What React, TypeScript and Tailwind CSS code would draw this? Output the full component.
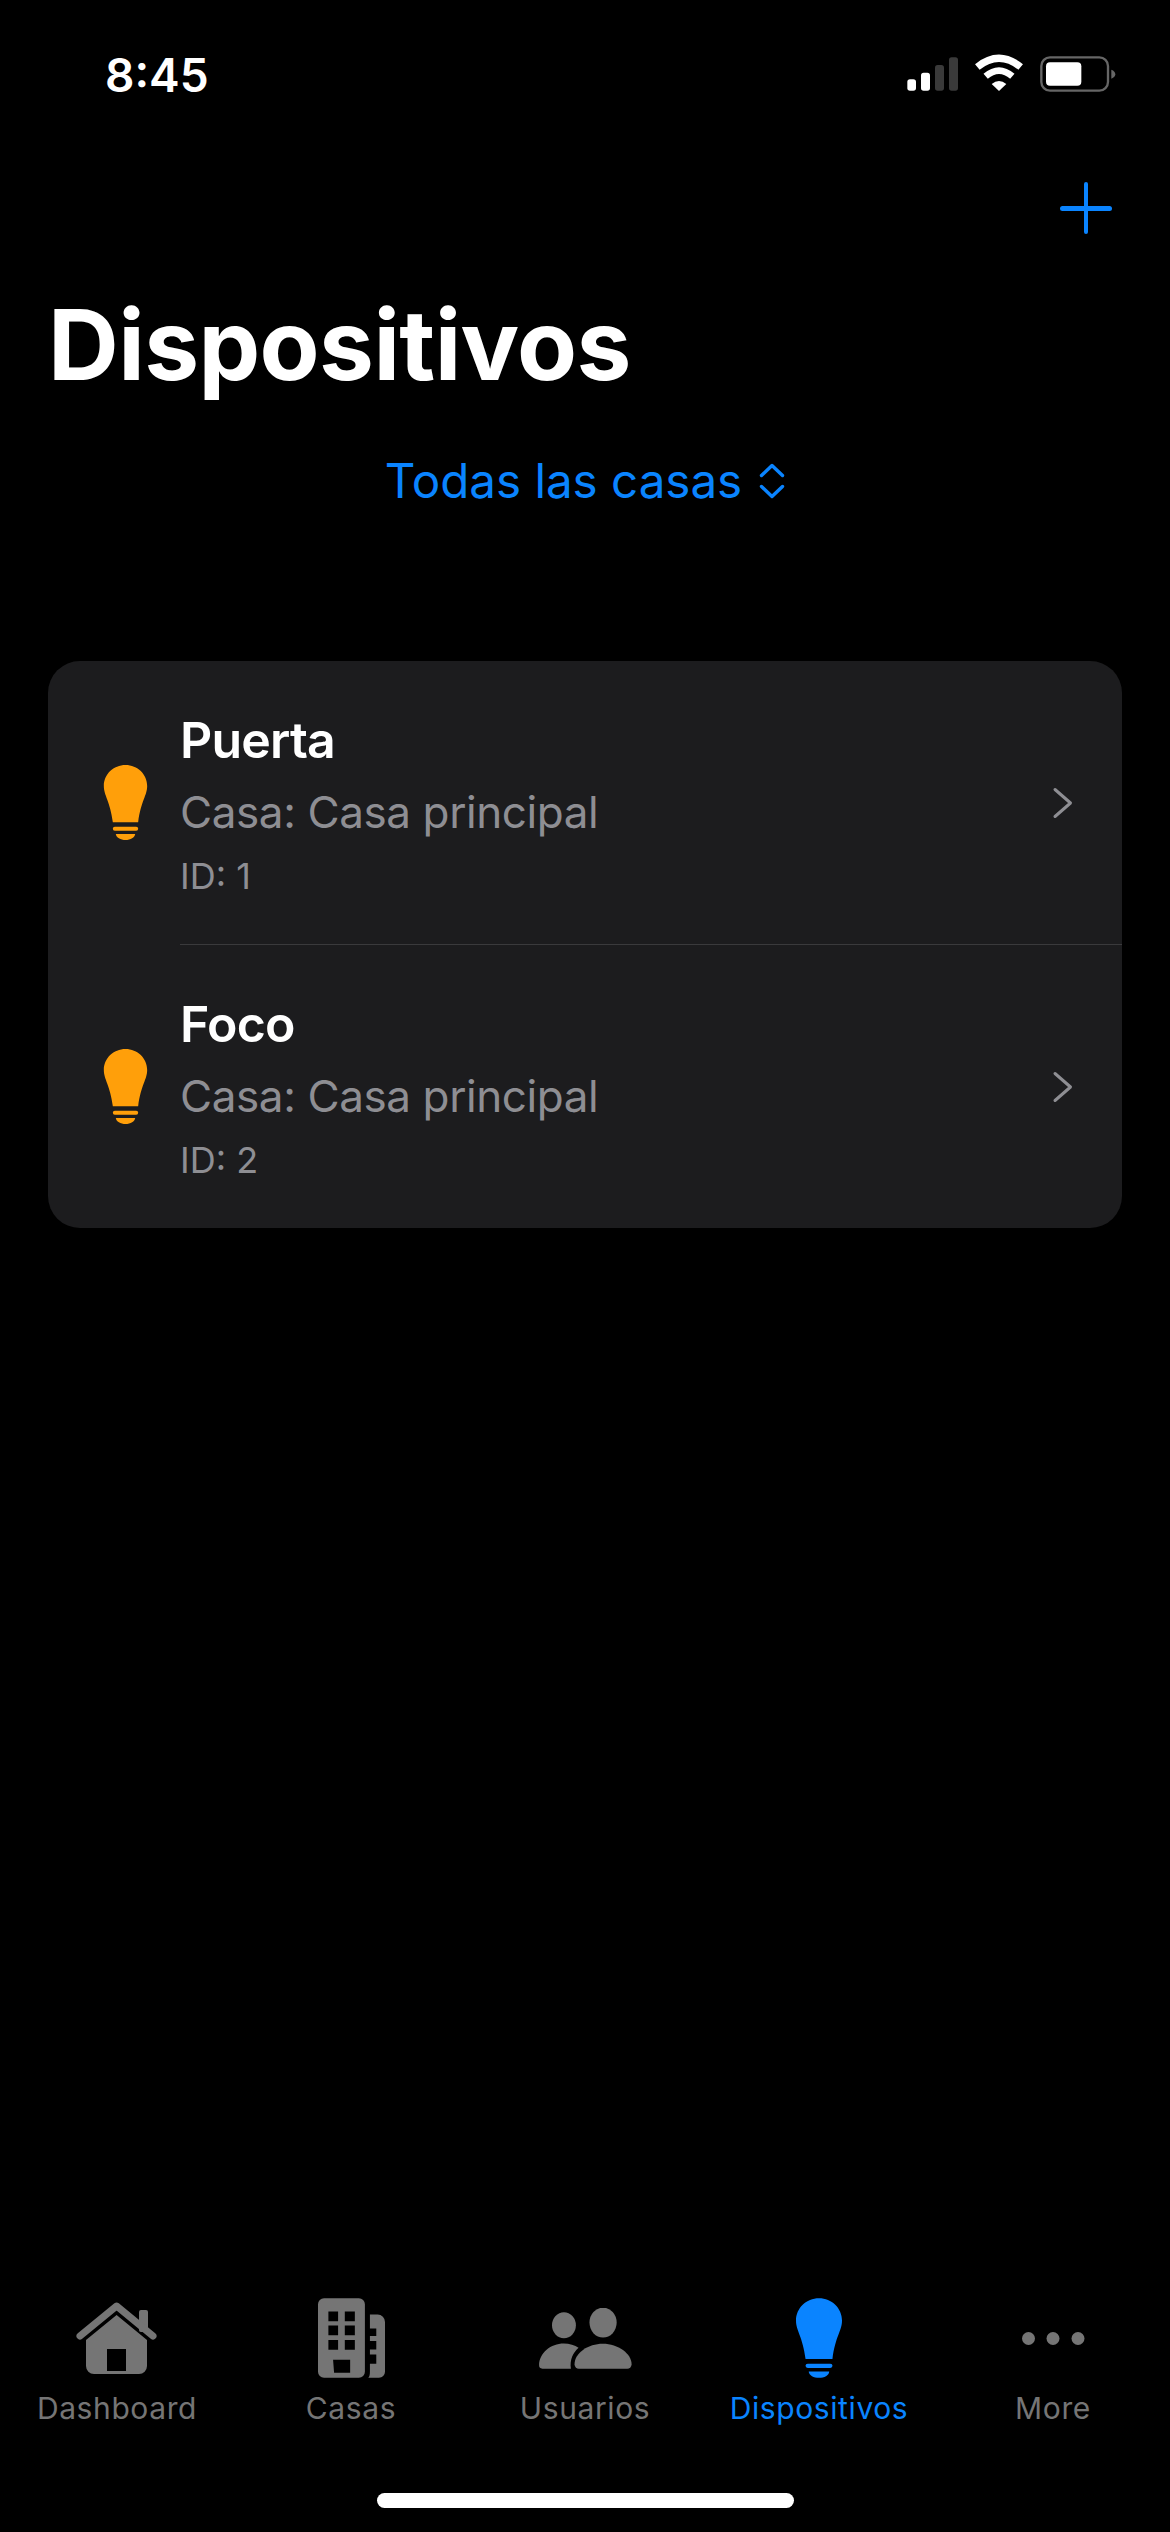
import React from 'react';

const font = { fontFamily: 'Inter, "Liberation Sans", sans-serif' };

const Bulb = ({ className, color }: { className: string; color: string }) => (
  <svg viewBox="0 0 130 225" className={className} fill={color}>
    <path d="M65 0C101 0 130 28 130 63C130 92 111 108 103 172H27C19 108 0 92 0 63C0 28 29 0 65 0Z" />
    <rect x="27" y="185" width="76" height="12" rx="6" />
    <path d="M36 207H94C93 218 80 225 65 225C50 225 37 218 36 207Z" />
  </svg>
);

const StatusIcons = () => (
  <svg viewBox="0 0 660 165" className="w-[220px] h-[55px]">
    <rect x="22" y="103" width="26" height="34" rx="8" fill="#fff" />
    <rect x="63" y="83" width="27" height="54" rx="8" fill="#fff" />
    <rect x="105" y="60" width="27" height="77" rx="8" fill="#3a3a3a" />
    <rect x="147" y="37" width="27" height="100" rx="8" fill="#3a3a3a" />
    <path d="M232 66Q297 14 362 66" fill="none" stroke="#fff" strokeWidth="22" />
    <path d="M257 94Q297 60 337 94" fill="none" stroke="#fff" strokeWidth="20" />
    <path d="M275 117Q297 99 319 117L297 138Z" fill="#fff" />
    <rect x="424" y="37" width="200" height="100" rx="26" fill="none" stroke="#666" strokeWidth="7" />
    <rect x="438" y="52" width="106" height="70" rx="12" fill="#fff" />
    <path d="M634 74C642 77 646 82 646 88C646 93 642 98 634 101Z" fill="#666" />
  </svg>
);

const UpDownIcon = () => (
  <svg viewBox="0 0 26 36" className="w-[26px] h-[36px]" fill="none" stroke="#0a84ff" strokeWidth="3.4" strokeLinecap="round" strokeLinejoin="round">
    <path d="M2.5 12.5L13 2.5L23.5 12.5" />
    <path d="M2.5 23.5L13 33.5L23.5 23.5" />
  </svg>
);

const RowChevron = () => (
  <svg viewBox="0 0 21 32" className="w-[21px] h-[32px] ml-auto mr-[49px] mt-[1px]" fill="none" stroke="#8e8e93" strokeWidth="3" strokeLinecap="round" strokeLinejoin="round">
    <path d="M3 2.5L18.5 16L3 29.5" />
  </svg>
);

const HomeIcon = () => (
  <svg viewBox="0 0 82 72" className="w-[82px] h-[72px]" fill="#757575">
    <rect x="63" y="8" width="9" height="22" rx="2" />
    <path d="M4 34L40.6 4L77 34" fill="none" stroke="#757575" strokeWidth="7" strokeLinecap="round" strokeLinejoin="round" />
    <path
      fillRule="evenodd"
      d="M40.6 13L71 38V64A8 8 0 0 1 63 72H18A8 8 0 0 1 10 64V38ZM31 47V69H50V47Z"
    />
  </svg>
);

const BuildingIcon = () => (
  <svg viewBox="50 27 200 238" className="w-[67px] h-[80px]" fill="#757575">
    <path
      fillRule="evenodd"
      d="M68 27H172A18 18 0 0 1 190 45V247A18 18 0 0 1 172 265H68A18 18 0 0 1 50 247V45A18 18 0 0 1 68 27ZM81 67V96H110V67ZM130 67V96H160V67ZM81 109V138H110V109ZM130 109V138H160V109ZM81 152V181H110V152ZM130 152V181H160V152ZM95 211L98 250H146V211Z"
    />
    <path d="M205 76H228A22 22 0 0 1 250 98V247A18 18 0 0 1 232 265H200C204 260 205 255 205 245V223H224V195H205V180H224V155H205V140H224V118H205Z" />
  </svg>
);

const UsersIcon = () => (
  <svg viewBox="36 40 280 184" className="w-[93px] h-[61px]" fill="#757575">
    <ellipse cx="111" cy="92" rx="36" ry="39" />
    <ellipse cx="229" cy="84" rx="41" ry="45" />
    <path d="M36 213C36 175 72 147 110 147C128 147 144 152 155 160C138 175 128 197 132 223H46A10 10 0 0 1 36 213Z" />
    <path d="M143 210C143 175 185 148 228 148C275 148 315 178 315 210A13 13 0 0 1 302 223H156A13 13 0 0 1 143 210Z" />
  </svg>
);

const DotsIcon = () => (
  <svg viewBox="0 0 63 13" className="w-[63px] h-[13px]" fill="#757575">
    <circle cx="6.5" cy="6.5" r="6.5" />
    <circle cx="31" cy="6.5" r="6.5" />
    <circle cx="56" cy="6.5" r="6.5" />
  </svg>
);

const devices = [
  { name: 'Puerta', house: 'Casa: Casa principal', id: 'ID: 1' },
  { name: 'Foco', house: 'Casa: Casa principal', id: 'ID: 2' },
];

const tabs = [
  { label: 'Dashboard', icon: <HomeIcon /> },
  { label: 'Casas', icon: <BuildingIcon /> },
  { label: 'Usuarios', icon: <UsersIcon /> },
  { label: 'Dispositivos', icon: <Bulb className="w-[46px] h-[80px]" color="#0a84ff" />, active: true },
  { label: 'More', icon: <DotsIcon /> },
];

export default function App() {
  return (
    <div className="w-[1170px] h-[2532px] bg-black flex flex-col text-white overflow-hidden" style={font}>
      <div className="flex justify-between items-start h-[100px] pl-[105px] pr-[50px] pt-[45px]">
        <span className="text-[46px] leading-[60px] font-semibold">8:45</span>
        <StatusIcons />
      </div>

      <div className="flex justify-end h-[185px] pr-[58px] pt-[82px]">
        <div className="relative w-[52px] h-[52px]">
          <div className="absolute left-[24px] top-0 w-[4px] h-[52px] rounded-full bg-[#0a84ff]" />
          <div className="absolute left-0 top-[24px] w-[52px] h-[5px] rounded-full bg-[#0a84ff]" />
        </div>
      </div>

      <h1 className="pl-[48px] text-[98px] leading-[120px] font-bold tracking-[-0.6px]">Dispositivos</h1>

      <div className="flex justify-center items-center gap-[17px] mt-[46px] h-[60px]">
        <span className="text-[47.5px] leading-[60px] text-[#0a84ff]">Todas las casas</span>
        <UpDownIcon />
      </div>

      <div className="mx-[48px] mt-[150px] rounded-[32px] bg-[#1c1c1e]">
        {devices.map((device, index) => (
          <div key={device.name} className="flex items-center h-[283.5px] pl-[55px] relative">
            <Bulb className="w-[45px] h-[75px] shrink-0" color="#ff9f0a" />
            <div className="ml-[32px] mt-[3px] flex flex-col gap-[12px]">
              <span className="text-[50px] leading-[60px] font-semibold tracking-[-0.8px]">{device.name}</span>
              <span className="text-[44px] leading-[60px] tracking-[-0.4px] text-[#8e8e93]">{device.house}</span>
              <span className="text-[36px] leading-[44px] text-[#8e8e93]">{device.id}</span>
            </div>
            <RowChevron />
            {index === 0 && <div className="absolute left-[132px] right-0 bottom-0 h-px bg-[#3a3a3c]" />}
          </div>
        ))}
      </div>

      <div className="mt-auto grid grid-cols-5">
        {tabs.map(tab => (
          <div key={tab.label} className={`flex flex-col items-center ${tab.active ? 'text-[#0a84ff]' : 'text-[#757575]'}`}>
            <div className="h-[84px] flex items-center justify-center">{tab.icon}</div>
            <span className="mt-[10px] text-[30px] leading-[36px] tracking-[0.6px]">{tab.label}</span>
          </div>
        ))}
      </div>

      <div className="flex justify-center pt-[67px] pb-[24px]">
        <div className="w-[417px] h-[15px] rounded-full bg-white" />
      </div>
    </div>
  );
}
